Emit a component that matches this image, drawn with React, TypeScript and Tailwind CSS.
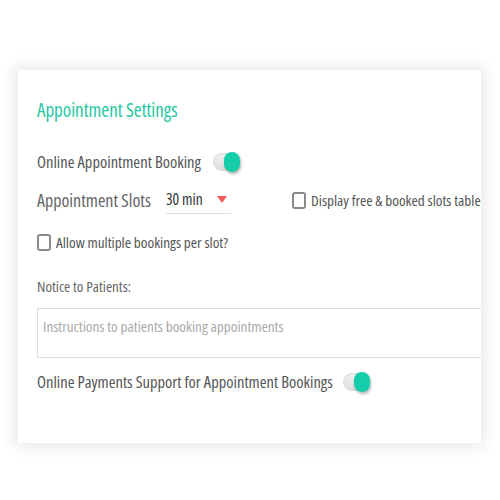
import React from "react";

function Toggle() {
  return (
    <div className="relative h-[20px] w-[27px] shrink-0">
      <div className="absolute inset-y-[1px] left-0 right-[2px] rounded-full bg-gradient-to-b from-[#f4f4f4] to-[#dcdcdc] shadow-[inset_0_1px_2px_rgba(0,0,0,0.12)]" />
      <div className="absolute right-0 top-0 h-[20px] w-[16px] rounded-full bg-[#14cea9] shadow-[1px_2px_3px_rgba(0,0,0,0.3)]" />
    </div>
  );
}

function Checkbox() {
  return <div className="h-[17px] w-[14px] shrink-0 rounded-[3px] border-2 border-[#8a8a8a] bg-white" />;
}

export default function App() {
  return (
    <div
      className="h-[500px] w-[500px] bg-white pt-[70px] pl-[18px] [font-stretch:75%]"
      style={{ fontFamily: '"Open Sans", "DejaVu Sans", sans-serif' }}
    >
      <div className="h-[373px] w-[463px] overflow-hidden bg-white shadow-[0_0_14px_4px_rgba(0,0,0,0.09)]">
        <div className="w-[520px] pl-[19px] pt-[28px]">
          {/* Titel */}
          <h2 className="text-[19px] leading-[24px] text-[#1fc7a2]">Appointment Settings</h2>

          <div className="mt-[30px] flex items-center gap-[12px]">
            <span className="text-[16.5px] leading-[20px] text-[#555]">Online Appointment Booking</span>
            <Toggle />
          </div>

          <div className="mt-[14px] flex items-center">
            <span className="text-[18px] leading-[20px] text-[#666]">Appointment Slots</span>
            <div className="ml-[15px] flex w-[65px] items-center justify-between border-b border-[#ddd] pb-[5px] pt-[4px]">
              <span className="text-[15.5px] leading-[18px] text-[#333]">30 min</span>
              <svg width="10" height="7" viewBox="0 0 10 7" className="mr-[4px]">
                <path d="M0 0 L10 0 L5 7 Z" fill="#f05a5a" />
              </svg>
            </div>
            <div className="ml-[61px] flex items-center gap-[5px]">
              <Checkbox />
              <span className="text-[15.2px] leading-[18px] text-[#555]">Display free &amp; booked slots table</span>
            </div>
          </div>

          <div className="mt-[19px] flex items-center gap-[5px]">
            <Checkbox />
            <span className="text-[15.2px] leading-[18px] text-[#555]">Allow multiple bookings per slot?</span>
          </div>

          <div className="mt-[26px] text-[15px] leading-[18px] text-[#666]">Notice to Patients:</div>

          <div className="mt-[13px] h-[50px] w-[445px] border border-[#ddd] px-[5px] pt-[8px] text-[15.2px] leading-[18px] text-[#aaa]">
            Instructions to patients booking appointments
          </div>

          <div className="mt-[14px] flex items-center gap-[10px]">
            <span className="text-[16.5px] leading-[20px] text-[#555]">Online Payments Support for Appointment Bookings</span>
            <Toggle />
          </div>
        </div>
      </div>
    </div>
  );
}
